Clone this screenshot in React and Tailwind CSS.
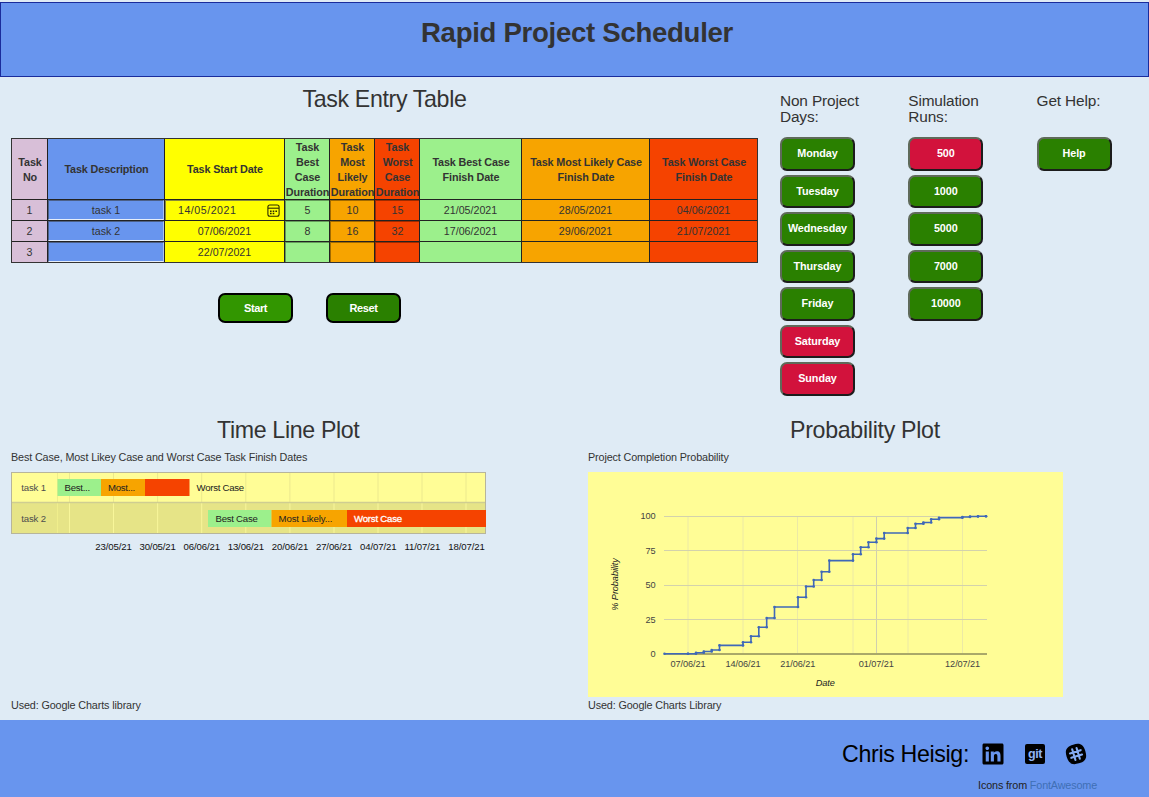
import React from 'react';
import { FaLinkedin } from 'react-icons/fa';

const columns = [
  { label: ['Task', 'No'], bg: 'bg-[#d8bfd8]' },
  { label: ['Task Description'], bg: 'bg-[#6895ee]' },
  { label: ['Task Start Date'], bg: 'bg-[#ffff00]' },
  { label: ['Task', 'Best', 'Case', 'Duration'], bg: 'bg-[#9cf08c]' },
  { label: ['Task', 'Most', 'Likely', 'Duration'], bg: 'bg-[#f7a400]' },
  { label: ['Task', 'Worst', 'Case', 'Duration'], bg: 'bg-[#f54300]' },
  { label: ['Task Best Case', 'Finish Date'], bg: 'bg-[#9cf08c]' },
  { label: ['Task Most Likely Case', 'Finish Date'], bg: 'bg-[#f7a400]' },
  { label: ['Task Worst Case', 'Finish Date'], bg: 'bg-[#f54300]' },
];

const rows = [
  ['1', 'task 1', '14/05/2021', '5', '10', '15', '21/05/2021', '28/05/2021', '04/06/2021'],
  ['2', 'task 2', '07/06/2021', '8', '16', '32', '17/06/2021', '29/06/2021', '21/07/2021'],
  ['3', '', '22/07/2021', '', '', '', '', '', ''],
];

const days = ['Monday', 'Tuesday', 'Wednesday', 'Thursday', 'Friday', 'Saturday', 'Sunday'];
const runs = ['500', '1000', '5000', '7000', '10000'];

function CalendarIcon() {
  return (
    <svg width="13" height="13" viewBox="0 0 13 13" fill="none" stroke="#2b2b00">
      <rect x="0.9" y="1" width="11.2" height="11.2" rx="2" strokeWidth="1.1" />
      <path d="M1 4.2H12" strokeWidth="1.1" />
      <path d="M3 7.2H4.6M5.7 7.2H7.3M8.4 7.2H10M3 9.5H4.6M5.7 9.5H7.3" strokeWidth="1.4" />
    </svg>
  );
}

function Cell({ value, col, row }) {
  const bg = columns[col].bg;
  if (col === 2 && row === 0) {
    return (
      <div className={`flex items-center justify-between border-l border-t border-[#8a8a3a] pr-[4px] pl-[12px] tracking-[0.5px] ${bg}`}>
        {value}
        <CalendarIcon />
      </div>
    );
  }
  if (col === 1) {
    return (
      <div className={`flex items-center justify-center border border-t-[#4c6088] border-r-[#a9c3f3] border-b-[#e6eefa] border-l-[#4c6088] ${bg}`}>
        {value}
      </div>
    );
  }
  const inset = col >= 3 && col <= 5 ? 'border-l border-t border-black/35' : '';
  return <div className={`flex items-center justify-center ${inset} ${bg}`}>{value}</div>;
}

function TaskTable() {
  return (
    <div className="grid w-[747px] grid-cols-[35px_116px_119px_44px_44px_44px_101px_127px_107px] grid-rows-[60px_20px_20px_20px] gap-px border border-[#333] bg-[#222] text-[10.67px] leading-[15px] text-[#333]">
      {columns.map((c, i) => (
        <div key={i} className={`flex flex-col items-center justify-center pt-[1px] pl-[1px] text-[10.8px] font-bold tracking-[-0.13px] whitespace-nowrap ${c.bg}`}>
          {c.label.map((l) => (
            <span key={l} className="h-[15px]">{l}</span>
          ))}
        </div>
      ))}
      {rows.map((r, ri) => r.map((v, ci) => <Cell key={`${ri}-${ci}`} value={v} col={ci} row={ri} />))}
    </div>
  );
}

function SideButton({ label, active }) {
  return (
    <button
      className={`h-[33.5px] w-[75px] rounded-[7px] border-2 border-t-[#5f6a5a] border-r-[#1c1c1c] border-b-[#1c1c1c] border-l-[#5f6a5a] text-center text-[10.8px] leading-[15px] font-bold tracking-[-0.08px] text-white ${
        active ? 'bg-[#d2123c]' : 'bg-[#2a8000]'
      }`}
    >
      {label}
    </button>
  );
}

function SideColumn({ title, items, active }) {
  return (
    <div className="flex w-[128.3px] flex-col">
      <div className="mb-3 h-8 text-[15.4px] leading-4 tracking-[-0.15px]">
        {title.map((t) => (
          <div key={t}>{t}</div>
        ))}
      </div>
      <div className="flex flex-col gap-1">
        {items.map((i) => (
          <SideButton key={i} label={i} active={active.includes(i)} />
        ))}
      </div>
    </div>
  );
}

const weekLabels = ['23/05/21', '30/05/21', '06/06/21', '13/06/21', '20/06/21', '27/06/21', '04/07/21', '11/07/21', '18/07/21'];

function Timeline() {
  const grid = [58.5, 102.5, 146.6, 190.7, 234.8, 278.9, 323, 367, 411, 455];
  return (
    <svg width="475" height="84" className="block" fontFamily="Liberation Sans, Arial, sans-serif" fontSize="9.6">
      <rect x="0" y="0" width="475" height="31" fill="#fffd96" />
      <rect x="0" y="31" width="475" height="31" fill="#e6e487" />
      {grid.map((x) => (
        <g key={x}>
          <path d={`M${x} 0V31`} stroke="#ece98e" />
          <path d={`M${x} 31V62`} stroke="#f8f69a" />
        </g>
      ))}
      <path d="M46.5 0V62" stroke="#f0ee8c" />
      <path d="M0 30.5H475" stroke="#cfcd92" strokeWidth="1.5" />
      <rect x="0.5" y="0.5" width="474" height="61" fill="none" stroke="#b7b59b" />
      <rect x="46.5" y="7" width="43.5" height="17" fill="#9cf08c" />
      <rect x="90" y="7" width="44" height="17" fill="#f7a400" />
      <rect x="134" y="7" width="44.5" height="17" fill="#f54300" />
      <rect x="197" y="38" width="63.5" height="17" fill="#9cf08c" />
      <rect x="260.5" y="38" width="75.5" height="17" fill="#f7a400" />
      <rect x="336" y="38" width="139" height="17" fill="#f54300" />
      <g fill="#4d4d4d">
        <text x="10.2" y="19">task 1</text>
        <text x="10.2" y="50">task 2</text>
      </g>
      <g fill="#222" letterSpacing="-0.25">
        <text x="53.5" y="19">Best...</text>
        <text x="97" y="19">Most...</text>
        <text x="185.5" y="19">Worst Case</text>
        <text x="204.5" y="50">Best Case</text>
        <text x="267.5" y="50" letterSpacing="-0.1">Most Likely...</text>
      </g>
      <text x="343" y="50" fill="#fff" stroke="#fff" strokeWidth="0.3" letterSpacing="-0.2">Worst Case</text>
      <g fill="#111" textAnchor="middle">
        {weekLabels.map((l, i) => (
          <text key={l} x={102.5 + i * 44.12} y="78">{l}</text>
        ))}
      </g>
    </svg>
  );
}

const points = [
  [76.5, 181.7], [100, 181.7], [108, 180.8], [115.8, 179.5], [123.7, 178], [131.5, 173.4], [155, 170.3],
  [163, 164.3], [170.8, 155.3], [178.7, 146], [186.5, 135], [210, 125.3], [218, 114.5], [225.7, 108],
  [233.6, 99.7], [241.3, 88.6], [265, 82.3], [272.7, 75.3], [280.5, 70.2], [288.4, 66.6], [296.2, 61],
  [319.7, 56], [327.5, 51.7], [335.4, 50.5], [343.2, 47.3], [351, 45.8], [374.4, 45], [382, 44.5],
  [390, 44.3], [398, 44.3],
];

function Probability() {
  const line = points.map(([x, y], i) => (i === 0 ? `M${x} ${y}` : `H${x}V${y}`)).join('');
  const ticks = [
    [100, '07/06/21'],
    [155, '14/06/21'],
    [209.8, '21/06/21'],
    [288.3, '01/07/21'],
    [374.6, '12/07/21'],
  ];
  return (
    <svg width="475" height="225" className="block bg-[#fffd96]" fontFamily="Liberation Sans, Arial, sans-serif" fontSize="9.2" letterSpacing="-0.1">
      {[100, 155, 209.5, 265, 320, 374.5].map((x) => (
        <path key={x} d={`M${x} 44V181`} stroke="#ece9a5" />
      ))}
      <path d="M288.5 44V181" stroke="#d0cfae" />
      {[44.5, 78.5, 113.5, 147.5].map((y) => (
        <path key={y} d={`M76 ${y}H399`} stroke="#d3d2ac" />
      ))}
      <path d="M76 182H399" stroke="#55543c" />
      <path d={line} fill="none" stroke="#3f68b8" strokeWidth="1.6" />
      {points.map(([x, y], i) => (
        <g key={x} fill="#3f68b8">
          <circle cx={x} cy={y} r="1.3" />
          {i > 0 && <circle cx={x} cy={points[i - 1][1]} r="1.3" />}
        </g>
      ))}
      <g fill="#444" textAnchor="end">
        {['100', '75', '50', '25', '0'].map((l, i) => (
          <text key={l} x="67.5" y={47.3 + i * 34.4}>{l}</text>
        ))}
      </g>
      <g fill="#444" textAnchor="middle">
        {ticks.map(([x, l]) => (
          <text key={l} x={x} y="194.7">{l}</text>
        ))}
      </g>
      <g fill="#222" fontStyle="italic" textAnchor="middle">
        <text x="237.3" y="214">Date</text>
        <text transform="translate(29.5 112.5) rotate(-90)">% Probability</text>
      </g>
    </svg>
  );
}

function GitIcon() {
  return (
    <svg width="20" height="20" viewBox="0 0 20 20">
      <rect width="20" height="20" rx="2" fill="#000" />
      <text x="10" y="13.6" textAnchor="middle" fontFamily="Liberation Sans, Arial, sans-serif" fontSize="12.5" fontWeight="bold" letterSpacing="-0.4" fill="#8fb3f5">
        git
      </text>
    </svg>
  );
}

function SlackIcon() {
  return (
    <svg width="22" height="22" viewBox="0 0 22 22">
      <g transform="rotate(-17 11 11)">
        <path d="M11 1.2C18 1.2 20.8 4 20.8 11S18 20.8 11 20.8 1.2 18 1.2 11 4 1.2 11 1.2Z" fill="#000" />
        <path d="M8.7 5.4V16.6M13.3 5.4V16.6M5.4 8.7H16.6M5.4 13.3H16.6" stroke="#84abf3" strokeWidth="2.1" strokeLinecap="round" />
      </g>
    </svg>
  );
}

export default function App() {
  return (
    <div className="flex h-[797px] w-[1149px] flex-col overflow-hidden bg-[#dfebf5] pt-[2px] font-['Liberation_Sans',Arial,sans-serif] text-[#333]">
      <header className="h-[75px] shrink-0 border border-[#1a2c9c] bg-[#6895ee] pt-[13px] pl-[5px] text-center">
        <h1 className="text-[27.6px] leading-[34px] font-bold tracking-[-0.3px]">Rapid Project Scheduler</h1>
      </header>

      <main className="flex h-[643px] shrink-0 flex-col">
        <section className="flex h-[338px] pl-[11px]">
          <div className="flex w-[747px] flex-col items-center pt-[9px]">
            <h2 className="mb-[25px] text-[23.2px] leading-[27px] tracking-[-0.36px]">Task Entry Table</h2>
            <TaskTable />
            <div className="mt-[30px] mr-[150px] flex gap-[33px]">
              <button className="h-[30px] w-[75px] rounded-[7px] border-2 border-black bg-[#329600] text-[11px] font-bold tracking-[-0.4px] text-white">Start</button>
              <button className="h-[30px] w-[75px] rounded-[7px] border-2 border-black bg-[#2a8000] text-[11px] font-bold tracking-[-0.4px] text-white">Reset</button>
            </div>
          </div>
          <div className="flex pt-4 pl-[22px]">
            <SideColumn title={['Non Project', 'Days:']} items={days} active={['Saturday', 'Sunday']} />
            <SideColumn title={['Simulation', 'Runs:']} items={runs} active={['500']} />
            <SideColumn title={['Get Help:']} items={['Help']} active={[]} />
          </div>
        </section>

        <section className="flex h-[305px] gap-[102px] pl-[11px] text-[10.8px] tracking-[-0.13px]">
          <div className="flex w-[475px] flex-col">
            <h2 className="h-[35px] pl-[206px] text-[23.2px] leading-[30px] tracking-[-0.35px]">Time Line Plot</h2>
            <p className="h-[22px] leading-[14px]">Best Case, Most Likey Case and Worst Case Task Finish Dates</p>
            <Timeline />
            <p className="mt-auto pb-[8px] leading-[14px]">Used: Google Charts library</p>
          </div>
          <div className="flex w-[475px] flex-col">
            <h2 className="h-[35px] pl-[202px] text-[23.2px] leading-[30px] tracking-[-0.3px]">Probability Plot</h2>
            <p className="h-[22px] leading-[14px]">Project Completion Probability</p>
            <Probability />
            <p className="mt-auto pb-[8px] leading-[14px]">Used: Google Charts Library</p>
          </div>
        </section>
      </main>

      <footer className="flex h-[77px] flex-col items-end bg-[#6895ee] pt-5 text-black">
        <div className="flex h-7 items-center pr-[62px]">
          <span className="text-[23.2px] leading-7 tracking-[-0.35px]">Chris Heisig:</span>
          <FaLinkedin className="ml-[12px] h-6 w-6" />
          <span className="ml-[20px]"><GitIcon /></span>
          <span className="ml-[20px]"><SlackIcon /></span>
        </div>
        <p className="mt-[10px] pr-[52px] text-[10.8px] leading-[14px] tracking-[-0.15px] text-[#222]">
          Icons from <a className="text-[#3f6fb5]">FontAwesome</a>
        </p>
      </footer>
    </div>
  );
}
